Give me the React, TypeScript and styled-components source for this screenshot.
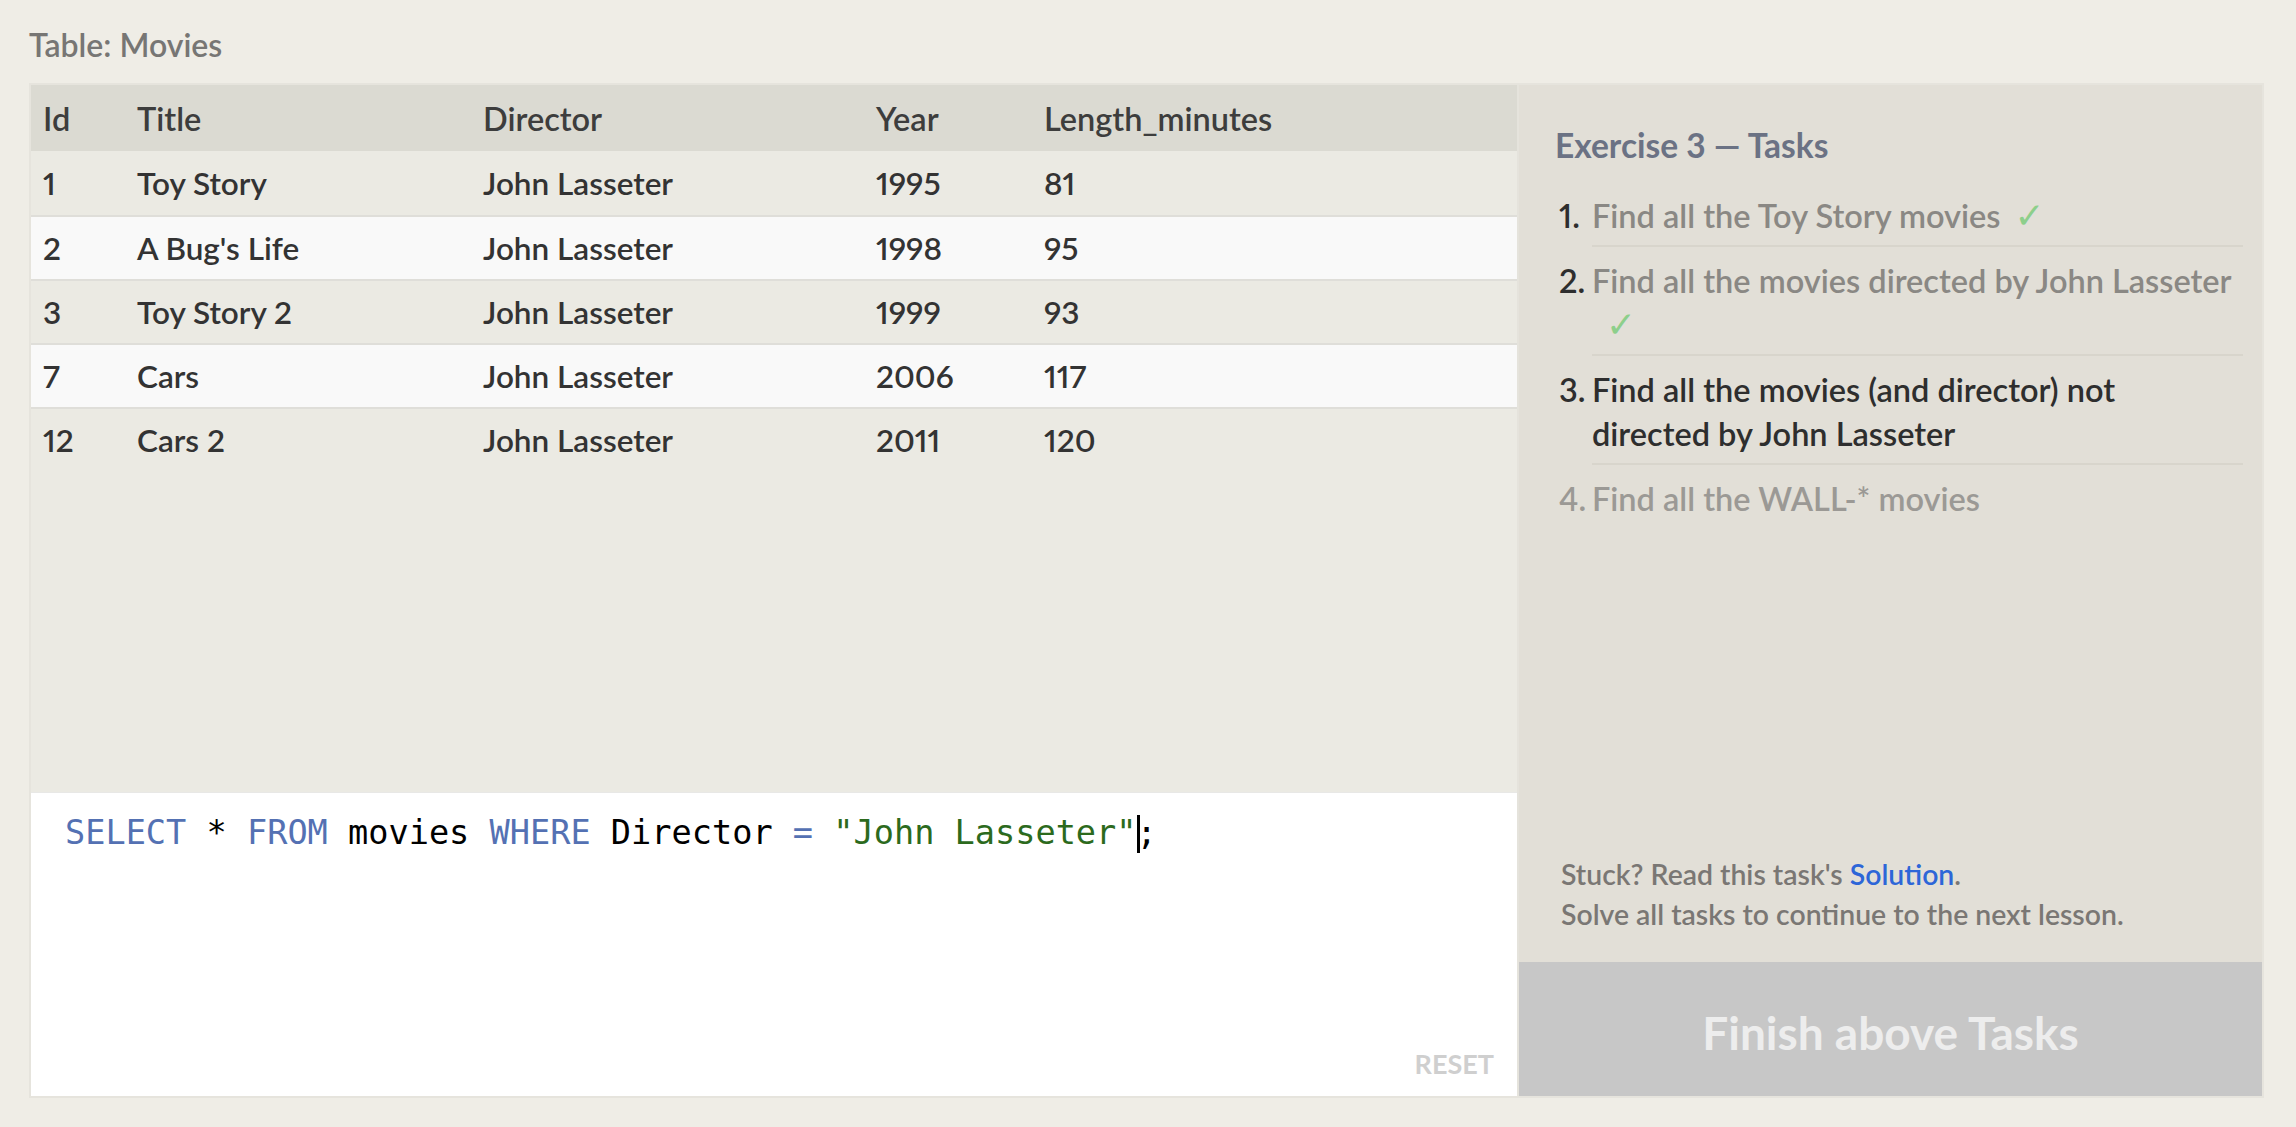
import React from 'react';
import styled, { createGlobalStyle } from 'styled-components';

const GlobalStyle = createGlobalStyle`
  html, body {
    margin: 0;
    padding: 0;
    background: #efede6;
  }
  body {
    font-family: Lato, "Open Sans", sans-serif;
    font-variant-numeric: proportional-nums;
    -webkit-font-smoothing: antialiased;
  }
`;

const Page = styled.div`
  padding: 25px 32px 0 29px;
`;

const TableName = styled.div`
  font-size: 32px;
  font-weight: 600;
  line-height: 40px;
  color: #777674;
  margin-bottom: 18px;
`;

const Frame = styled.div`
  display: flex;
  height: 1015px;
  box-sizing: border-box;
  border: 2px solid #e6e4dd;
`;

const LeftPanel = styled.div`
  width: 1486px;
  display: flex;
  flex-direction: column;
`;

const TableArea = styled.div`
  flex: 1;
  background: #ebeae3;
`;

const Grid = styled.div<{ $head?: boolean; $alt?: boolean; $first?: boolean }>`
  display: grid;
  grid-template-columns: 94px 346px 393px 168px 1fr;
  align-items: center;
  height: ${(p) => (p.$head ? 66 : p.$first ? 64 : 62)}px;
  background: ${(p) => (p.$head ? '#dbdad2' : p.$alt ? '#f9f9f9' : 'transparent')};
  border-top: ${(p) => (p.$head || p.$first ? 'none' : '2px solid #dfded9')};
  color: ${(p) => (p.$head ? '#3d3d3d' : '#333333')};
`;

const Cell = styled.div<{ $head?: boolean }>`
  padding-left: 12px;
  font-size: ${(p) => (p.$head ? 32.5 : 31.5)}px;
  font-weight: 600;
  white-space: nowrap;
`;

const Editor = styled.div`
  height: 304px;
  box-sizing: border-box;
  background: #ffffff;
  border-top: 1px solid #e8e8e6;
  padding: 18px 23px 16px 34px;
  display: flex;
  flex-direction: column;
`;

const CodeLine = styled.div`
  font-family: "DejaVu Sans Mono", "Liberation Mono", monospace;
  font-size: 33.6px;
  line-height: 44px;
  color: #000000;
  white-space: pre;
`;

const Tok = styled.span<{ $kind: 'kw' | 'str' | 'op' }>`
  color: ${(p) => (p.$kind === 'str' ? '#2c6a1d' : '#5471b3')};
`;

const Cursor = styled.span`
  display: inline-block;
  width: 3px;
  height: 38px;
  margin-right: -3px;
  background: #000;
  vertical-align: -9px;
`;

const ResetButton = styled.div`
  margin-top: auto;
  align-self: flex-end;
  font-size: 27px;
  font-weight: 700;
  line-height: 32px;
  color: #cfcfcf;
`;

const RightPanel = styled.div`
  flex: 1;
  display: flex;
  flex-direction: column;
  background: #e2dfd7;
  border-left: 2px solid #e5e3dc;
`;

const TasksHeading = styled.div`
  padding: 38px 0 0 36px;
  font-size: 33.5px;
  font-weight: 700;
  line-height: 44px;
  color: #6b7284;
`;

const TaskList = styled.div`
  margin: 15px 19px 0 40px;
`;

const TaskItem = styled.div`
  display: flex;
`;

const TaskNum = styled.div<{ $muted?: boolean }>`
  width: 33px;
  flex: none;
  padding-top: 12px;
  font-size: 32.5px;
  font-weight: 600;
  line-height: 44px;
  color: ${(p) => (p.$muted ? '#9b9995' : '#2e2e2e')};
`;

const TaskText = styled.div<{ $state: 'done' | 'current' | 'todo'; $last?: boolean }>`
  flex: 1;
  padding: 12px 0 7px;
  font-size: 32.5px;
  font-weight: 600;
  line-height: 44px;
  white-space: pre-line;
  color: ${(p) => (p.$state === 'current' ? '#2e2e2e' : p.$state === 'done' ? '#8a8884' : '#9b9995')};
  border-bottom: 2px solid ${(p) => (p.$last ? 'transparent' : '#d8d5cc')};
`;

const Check = styled.span`
  display: inline-block;
  margin-left: 14px;
  font-family: "DejaVu Sans", sans-serif;
  font-size: 36px;
  font-weight: 700;
  line-height: 20px;
  color: #8dcf8b;
`;

const Help = styled.div`
  margin-top: auto;
  padding: 0 0 28px 42px;
  font-size: 28.4px;
  font-weight: 600;
  line-height: 40px;
  color: #7a7774;
`;

const SolutionLink = styled.a`
  color: #2d66d8;
  text-decoration: none;
`;

const FinishButton = styled.div`
  height: 134px;
  padding-top: 6px;
  box-sizing: border-box;
  display: flex;
  align-items: center;
  justify-content: center;
  background: #c7c7c7;
  color: #ededed;
  font-size: 46px;
  font-weight: 700;
`;

const columns = ['Id', 'Title', 'Director', 'Year', 'Length_minutes'];

const movies = [
  [1, 'Toy Story', 'John Lasseter', 1995, 81],
  [2, "A Bug's Life", 'John Lasseter', 1998, 95],
  [3, 'Toy Story 2', 'John Lasseter', 1999, 93],
  [7, 'Cars', 'John Lasseter', 2006, 117],
  [12, 'Cars 2', 'John Lasseter', 2011, 120],
];

type Task = { text: string; state: 'done' | 'current' | 'todo' };

const tasks: Task[] = [
  { text: 'Find all the Toy Story movies', state: 'done' },
  { text: 'Find all the movies directed by John Lasseter', state: 'done' },
  { text: 'Find all the movies (and director) not\ndirected by John Lasseter', state: 'current' },
  { text: 'Find all the WALL-* movies', state: 'todo' },
];

export default function App() {
  return (
    <>
      <GlobalStyle />
      <Page>
        <TableName>Table: Movies</TableName>
        <Frame>
          <LeftPanel>
            <TableArea>
              <Grid $head>
                {columns.map((c) => (
                  <Cell key={c} $head>
                    {c}
                  </Cell>
                ))}
              </Grid>
              {movies.map((m, i) => (
                <Grid key={i} $first={i === 0} $alt={i % 2 === 1}>
                  {m.map((v, j) => (
                    <Cell key={j}>{v}</Cell>
                  ))}
                </Grid>
              ))}
            </TableArea>
            <Editor>
              <CodeLine>
                <Tok $kind="kw">SELECT</Tok> * <Tok $kind="kw">FROM</Tok> movies{' '}
                <Tok $kind="kw">WHERE</Tok> Director <Tok $kind="op">=</Tok>{' '}
                <Tok $kind="str">"John Lasseter"</Tok>
                <Cursor />;
              </CodeLine>
              <ResetButton>RESET</ResetButton>
            </Editor>
          </LeftPanel>
          <RightPanel>
            <TasksHeading>Exercise 3 — Tasks</TasksHeading>
            <TaskList>
              {tasks.map((t, i) => (
                <TaskItem key={i}>
                  <TaskNum $muted={t.state === 'todo'}>{i + 1}.</TaskNum>
                  <TaskText $state={t.state} $last={i === tasks.length - 1}>
                    {t.text}
                    {t.state === 'done' && <Check>✓</Check>}
                  </TaskText>
                </TaskItem>
              ))}
            </TaskList>
            <Help>
              Stuck? Read this task's <SolutionLink href="#">Solution</SolutionLink>.
              <br />
              Solve all tasks to continue to the next lesson.
            </Help>
            <FinishButton>Finish above Tasks</FinishButton>
          </RightPanel>
        </Frame>
      </Page>
    </>
  );
}
